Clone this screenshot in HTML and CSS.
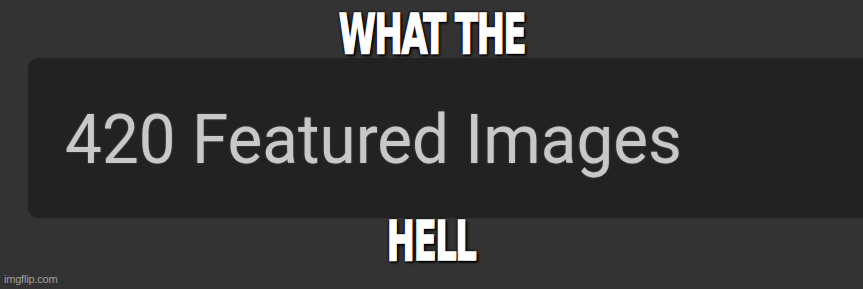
FILE: index.html
```html
<!DOCTYPE html>
<html lang="en">
<head>
<meta charset="utf-8">
<title>What the hell</title>
<link rel="stylesheet" href="styles.css">
</head>
<body>
<main class="meme">
  <div class="caption caption-top"><span class="caption-text">WHAT THE</span></div>
  <div class="panel">
    <span class="panel-text">420 Featured Images</span>
  </div>
  <div class="caption caption-bottom"><span class="caption-text">HELL</span></div>
  <div class="watermark">imgflip.com</div>
</main>
</body>
</html>
```

FILE: styles.css
```css
html, body {
  margin: 0;
  padding: 0;
  background: #333333;
  overflow: hidden;
}

.meme {
  width: 863px;
  height: 289px;
  display: flex;
  flex-direction: column;
  overflow: hidden;
}

.caption {
  display: flex;
  justify-content: center;
  font-family: "DejaVu Sans Condensed", "DejaVu Sans", sans-serif;
  font-weight: 700;
  font-size: 55px;
  color: #ffffff;
  white-space: nowrap;
}

.caption-top {
  height: 48px;
  line-height: 48px;
  padding-top: 10px;
}

.caption-bottom {
  height: 46px;
  line-height: 46px;
}

.caption-text {
  display: inline-block;
  transform: scaleX(0.68);
  letter-spacing: -2px;
  -webkit-text-stroke: 1.6px #ffffff;
  text-shadow: 0 0 3px #000, 1px 1px 3px #000, -1px -1px 3px #000, 2px 2px 4px #000, 2px 2px 2px #000;
}

.panel {
  margin-left: 28px;
  margin-right: -40px;
  height: 160px;
  background: #222222;
  border-radius: 10px;
  display: flex;
  align-items: center;
  padding-left: 37px;
}

.panel-text {
  display: inline-block;
  transform: scaleX(0.965);
  transform-origin: left center;
  font-family: Roboto, "Liberation Sans", sans-serif;
  font-size: 68px;
  line-height: 80px;
  color: #c8c8c8;
  white-space: nowrap;
  text-shadow: 0 0 2px rgba(200, 200, 200, 0.4);
  padding-top: 4px;
}

.watermark {
  margin-top: 8px;
  padding-left: 4px;
  font-family: "Liberation Sans", Arial, sans-serif;
  font-size: 11px;
  line-height: 14px;
  color: #a0a0a0;
  letter-spacing: -0.2px;
}
```
